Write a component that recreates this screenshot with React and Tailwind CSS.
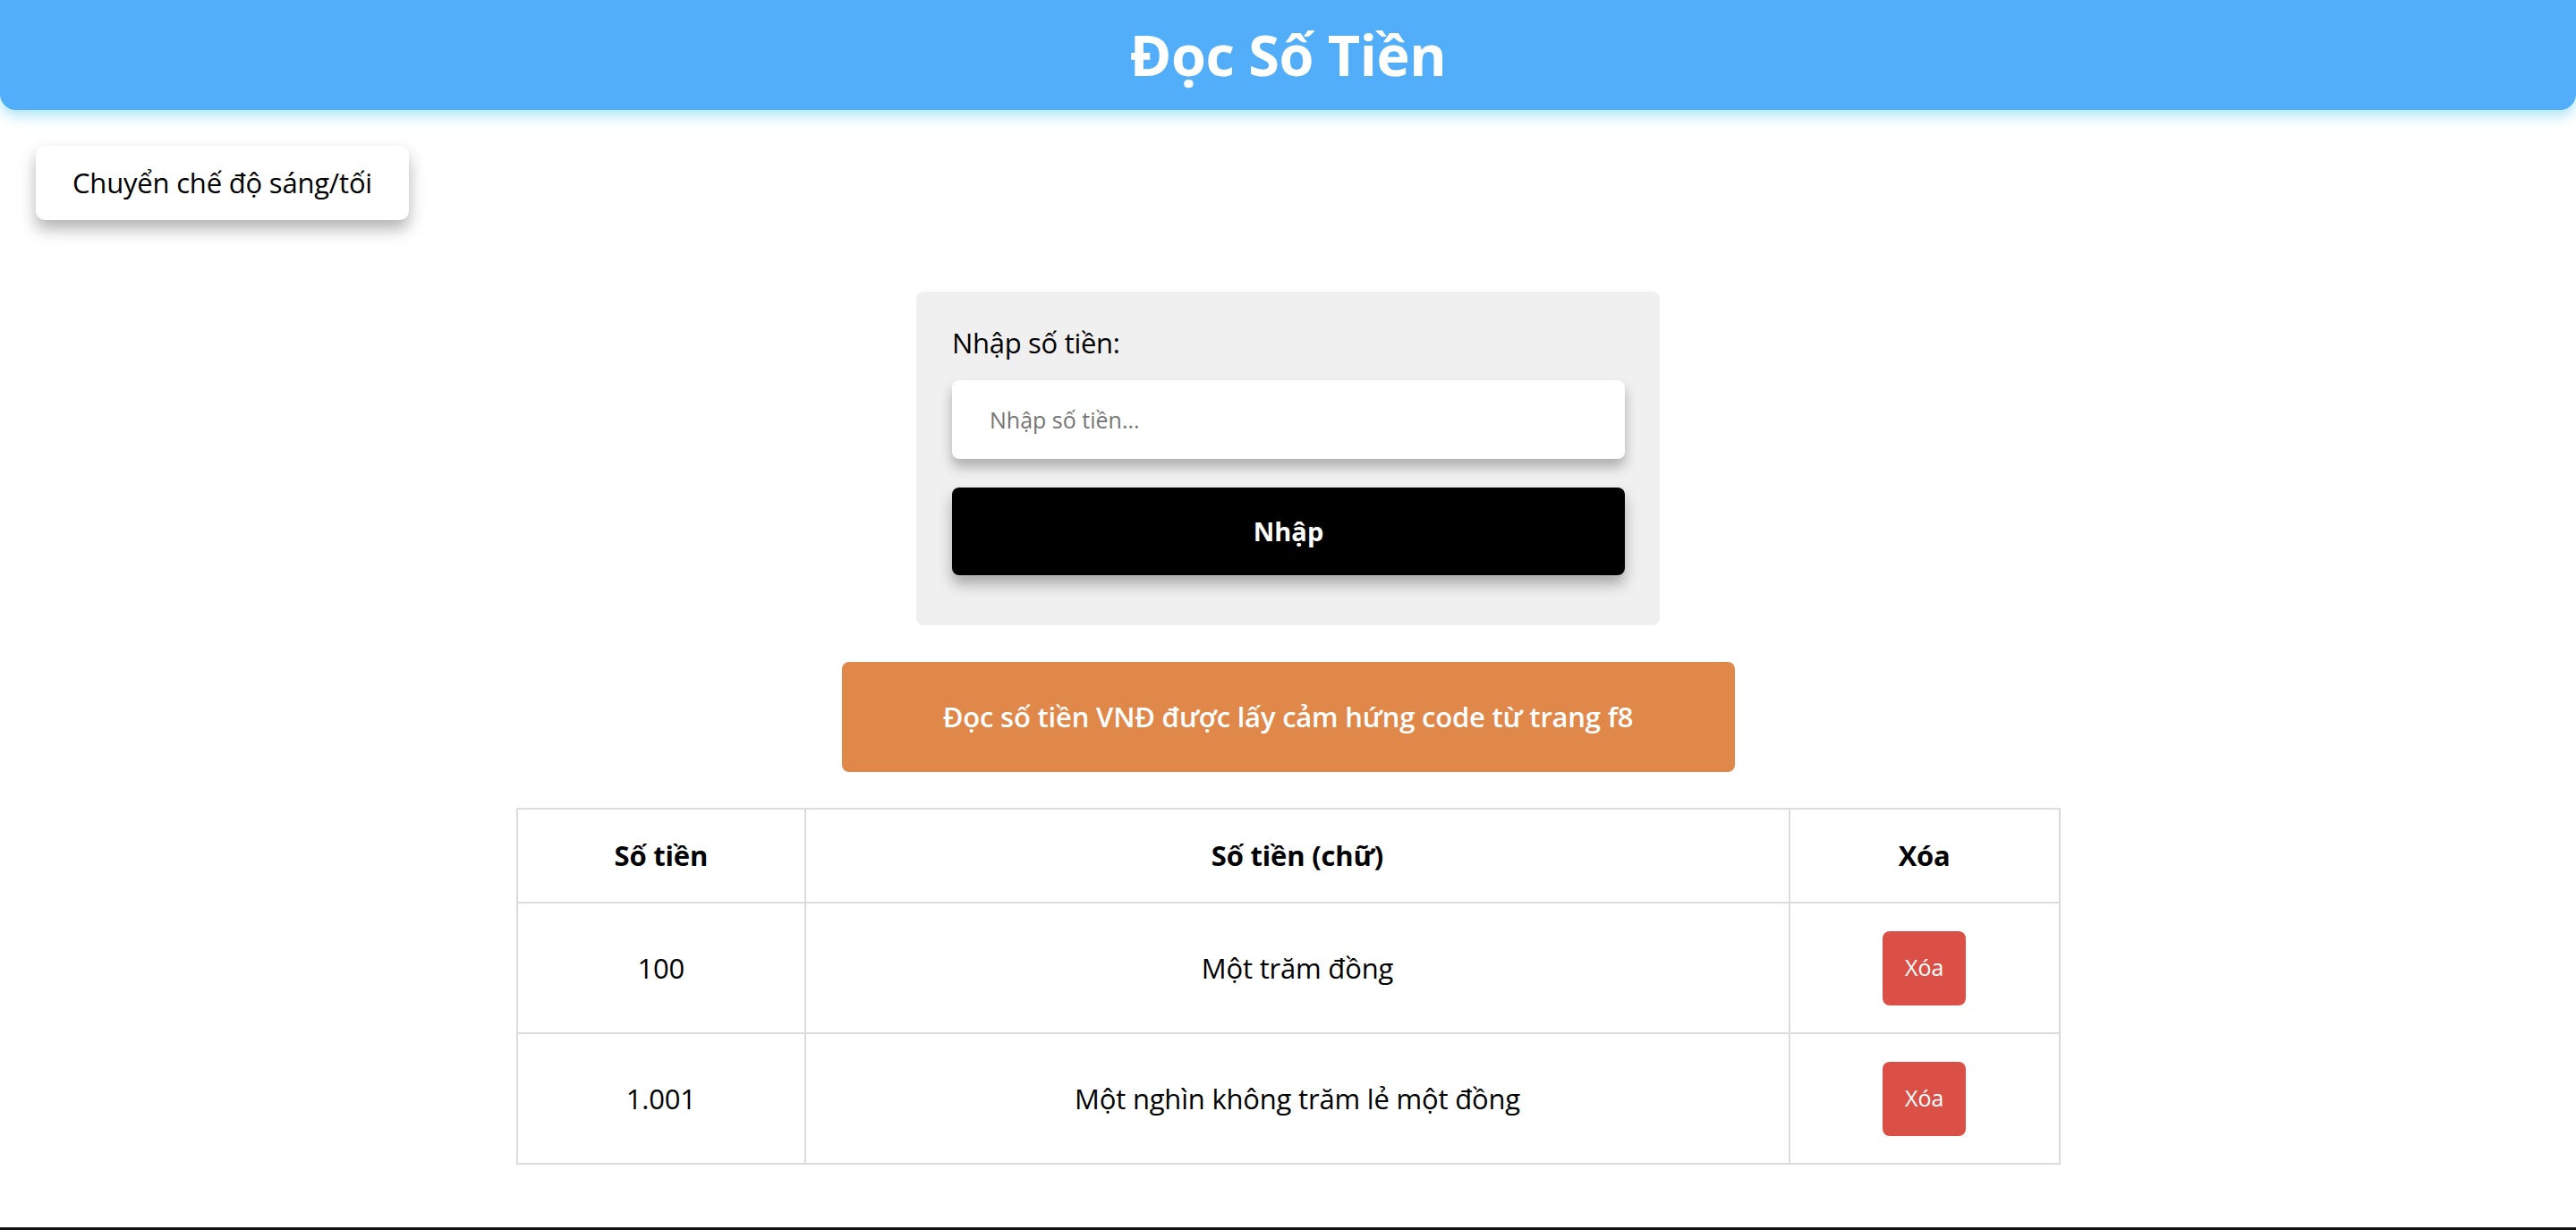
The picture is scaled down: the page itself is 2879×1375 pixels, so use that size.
const rows = [
  { num: '100', words: 'Một trăm đồng' },
  { num: '1.001', words: 'Một nghìn không trăm lẻ một đồng' },
];

export default function App() {
  return (
    <div className="min-h-[1375px] bg-white flex flex-col font-['Open_Sans','Noto_Sans',sans-serif] text-black">
      {/* Header */}
      <header className="h-[123px] bg-[#52aef9] rounded-b-[18px] shadow-[0_6px_16px_#a9e3f6] flex items-center justify-center">
        <h1 className="text-[63px] font-bold text-white tracking-[-0.5px]">Đọc Số Tiền</h1>
      </header>

      {/* Theme toggle */}
      <div className="px-[40px] pt-[40px]">
        <button className="w-[417px] h-[83px] bg-white rounded-[10px] shadow-[0_10px_18px_rgba(0,0,0,0.3)] text-[31px] tracking-[-0.2px]">
          Chuyển chế độ sáng/tối
        </button>
      </div>

      {/* Form */}
      <div className="mt-[80px] mx-auto w-[831px] bg-[#f0f0f0] rounded-[8px] px-[40px] pt-[36px] pb-[56px]">
        <label className="block text-[31px] leading-[42px] tracking-[-0.3px]">Nhập số tiền:</label>
        <input
          type="text"
          placeholder="Nhập số tiền..."
          className="mt-[21px] w-[752px] h-[88px] bg-white rounded-[8px] px-[42px] text-[25px] placeholder:text-[#757575] shadow-[0_9px_14px_rgba(0,0,0,0.28)] outline-none"
        />
        <button className="mt-[32px] w-[752px] h-[98px] bg-black text-white rounded-[8px] text-[29px] font-bold shadow-[0_10px_16px_rgba(0,0,0,0.3)]">
          Nhập
        </button>
      </div>

      {/* Banner */}
      <div className="mt-[41px] mx-auto w-[998px] h-[123px] bg-[#e0874a] rounded-[8px] flex items-center justify-center text-white text-[31px] font-semibold tracking-[-0.2px]">
        Đọc số tiền VNĐ được lấy cảm hứng code từ trang f8
      </div>

      {/* Table */}
      <table className="mt-[40px] mx-auto w-[1726px] border-collapse text-[31px] tracking-[-0.2px]">
        <thead>
          <tr className="h-[105px]">
            <th className="w-[323px] border-2 border-[#dcdcdc] font-bold">Số tiền</th>
            <th className="w-[1101px] border-2 border-[#dcdcdc] font-bold">Số tiền (chữ)</th>
            <th className="w-[302px] border-2 border-[#dcdcdc] font-bold">Xóa</th>
          </tr>
        </thead>
        <tbody>
          {rows.map((r) => (
            <tr key={r.num} className="h-[146px]">
              <td className="border-2 border-[#dcdcdc] text-center">{r.num}</td>
              <td className="border-2 border-[#dcdcdc] text-center">{r.words}</td>
              <td className="border-2 border-[#dcdcdc] text-center">
                <button className="w-[93px] h-[83px] bg-[#db5046] text-white rounded-[8px] text-[25px] tracking-normal">
                  Xóa
                </button>
              </td>
            </tr>
          ))}
        </tbody>
      </table>

      <div className="flex-1" />
      <div className="border-t-[3px] border-[#111]" />
    </div>
  );
}
